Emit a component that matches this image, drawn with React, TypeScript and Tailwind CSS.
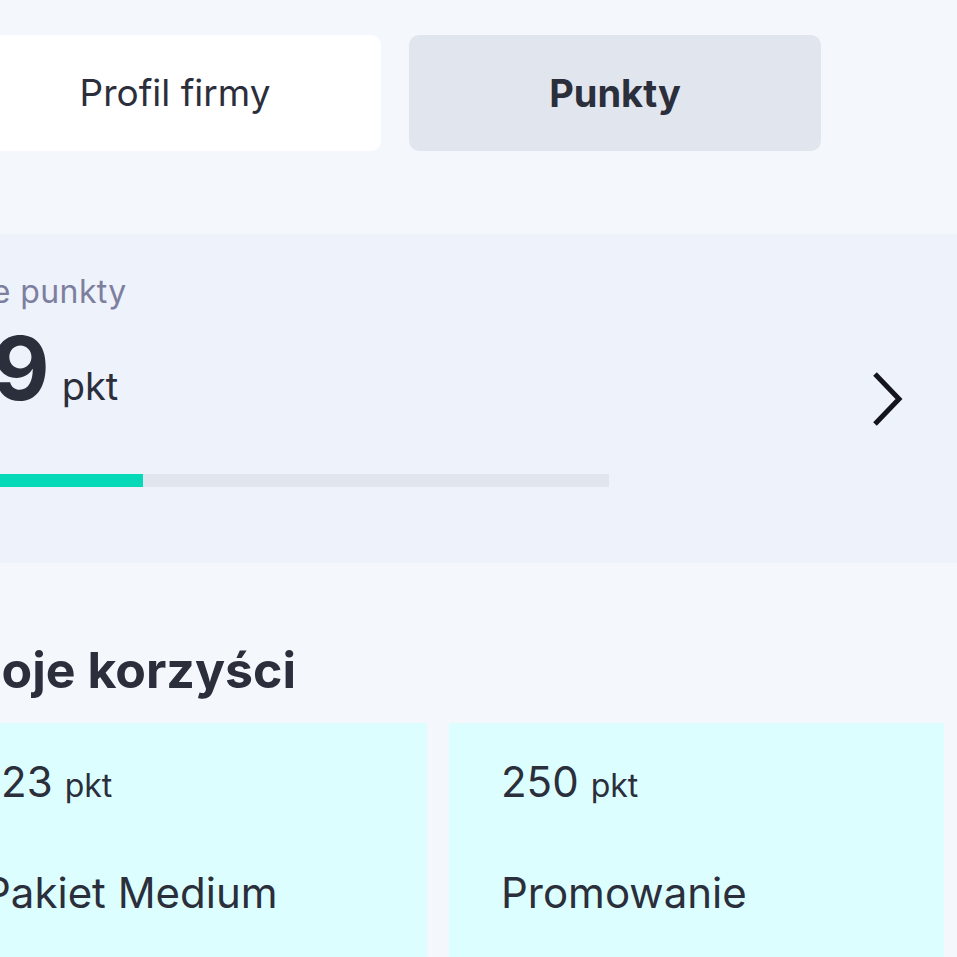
import React from "react";

const Chevron = () => (
  <svg width="40" height="60" viewBox="0 0 40 60" fill="none">
    <polyline
      points="8,5 32,30 8,55"
      stroke="#14141f"
      strokeWidth="5"
      strokeLinejoin="miter"
      strokeLinecap="butt"
    />
  </svg>
);

const BenefitCard = ({ points, title }: { points: string; title: string }) => (
  <div className="w-[495px] h-[260px] shrink-0 bg-[#dcfefe] pl-[52px] pt-[38px]">
    <div className="flex items-baseline gap-[12px] leading-none text-[#2b2e3b]">
      <span className="text-[42px]">{points}</span>
      <span className="text-[32px]">pkt</span>
    </div>
    <p className="mt-[69px] text-[42px] leading-none text-[#2b2e3b]">{title}</p>
  </div>
);

const App = () => {
  const progress = 31.7;

  return (
    <div className="w-[957px] h-[957px] overflow-hidden bg-[#f4f7fc] font-['Inter',sans-serif]">
      <div className="flex gap-[28px] pt-[35px] ml-[-31px]">
        <button className="w-[412px] h-[116px] shrink-0 rounded-[10px] bg-white text-[37px] text-[#2b2e3b]">
          Profil firmy
        </button>
        <button className="w-[412px] h-[116px] shrink-0 rounded-[10px] bg-[#e1e5ee] text-[38px] font-bold text-[#2b2e3b]">
          Punkty
        </button>
      </div>

      <div className="mt-[83px] h-[329px] bg-[#eef2fb] flex items-center justify-between pr-[50px]">
        <div className="ml-[-73px] self-start pt-[42px]">
          <p className="ml-[-8px] text-[32px] tracking-[0.4px] leading-none text-[#7d7f9f]">Twoje punkty</p>
          <div className="mt-[16px] flex items-baseline gap-[12px] leading-none text-[#2b2e3b]">
            <span className="ml-[6px] text-[88px] font-bold">49</span>
            <span className="text-[38px]">pkt</span>
          </div>
          <div className="mt-[62px] w-[682px] h-[13px] bg-[#e1e5ee]">
            <div className="h-full bg-[#05d9b7]" style={{ width: `${progress}%` }} />
          </div>
        </div>
        <Chevron />
      </div>

      <h2 className="mt-[82px] ml-[-45px] text-[50px] font-bold leading-none text-[#2b2e3b]">
        Moje korzyści
      </h2>

      <div className="mt-[28px] ml-[-68px] flex gap-[22px]">
        <BenefitCard points="123" title="Pakiet Medium" />
        <BenefitCard points="250" title="Promowanie" />
      </div>
    </div>
  );
};

export default App;
